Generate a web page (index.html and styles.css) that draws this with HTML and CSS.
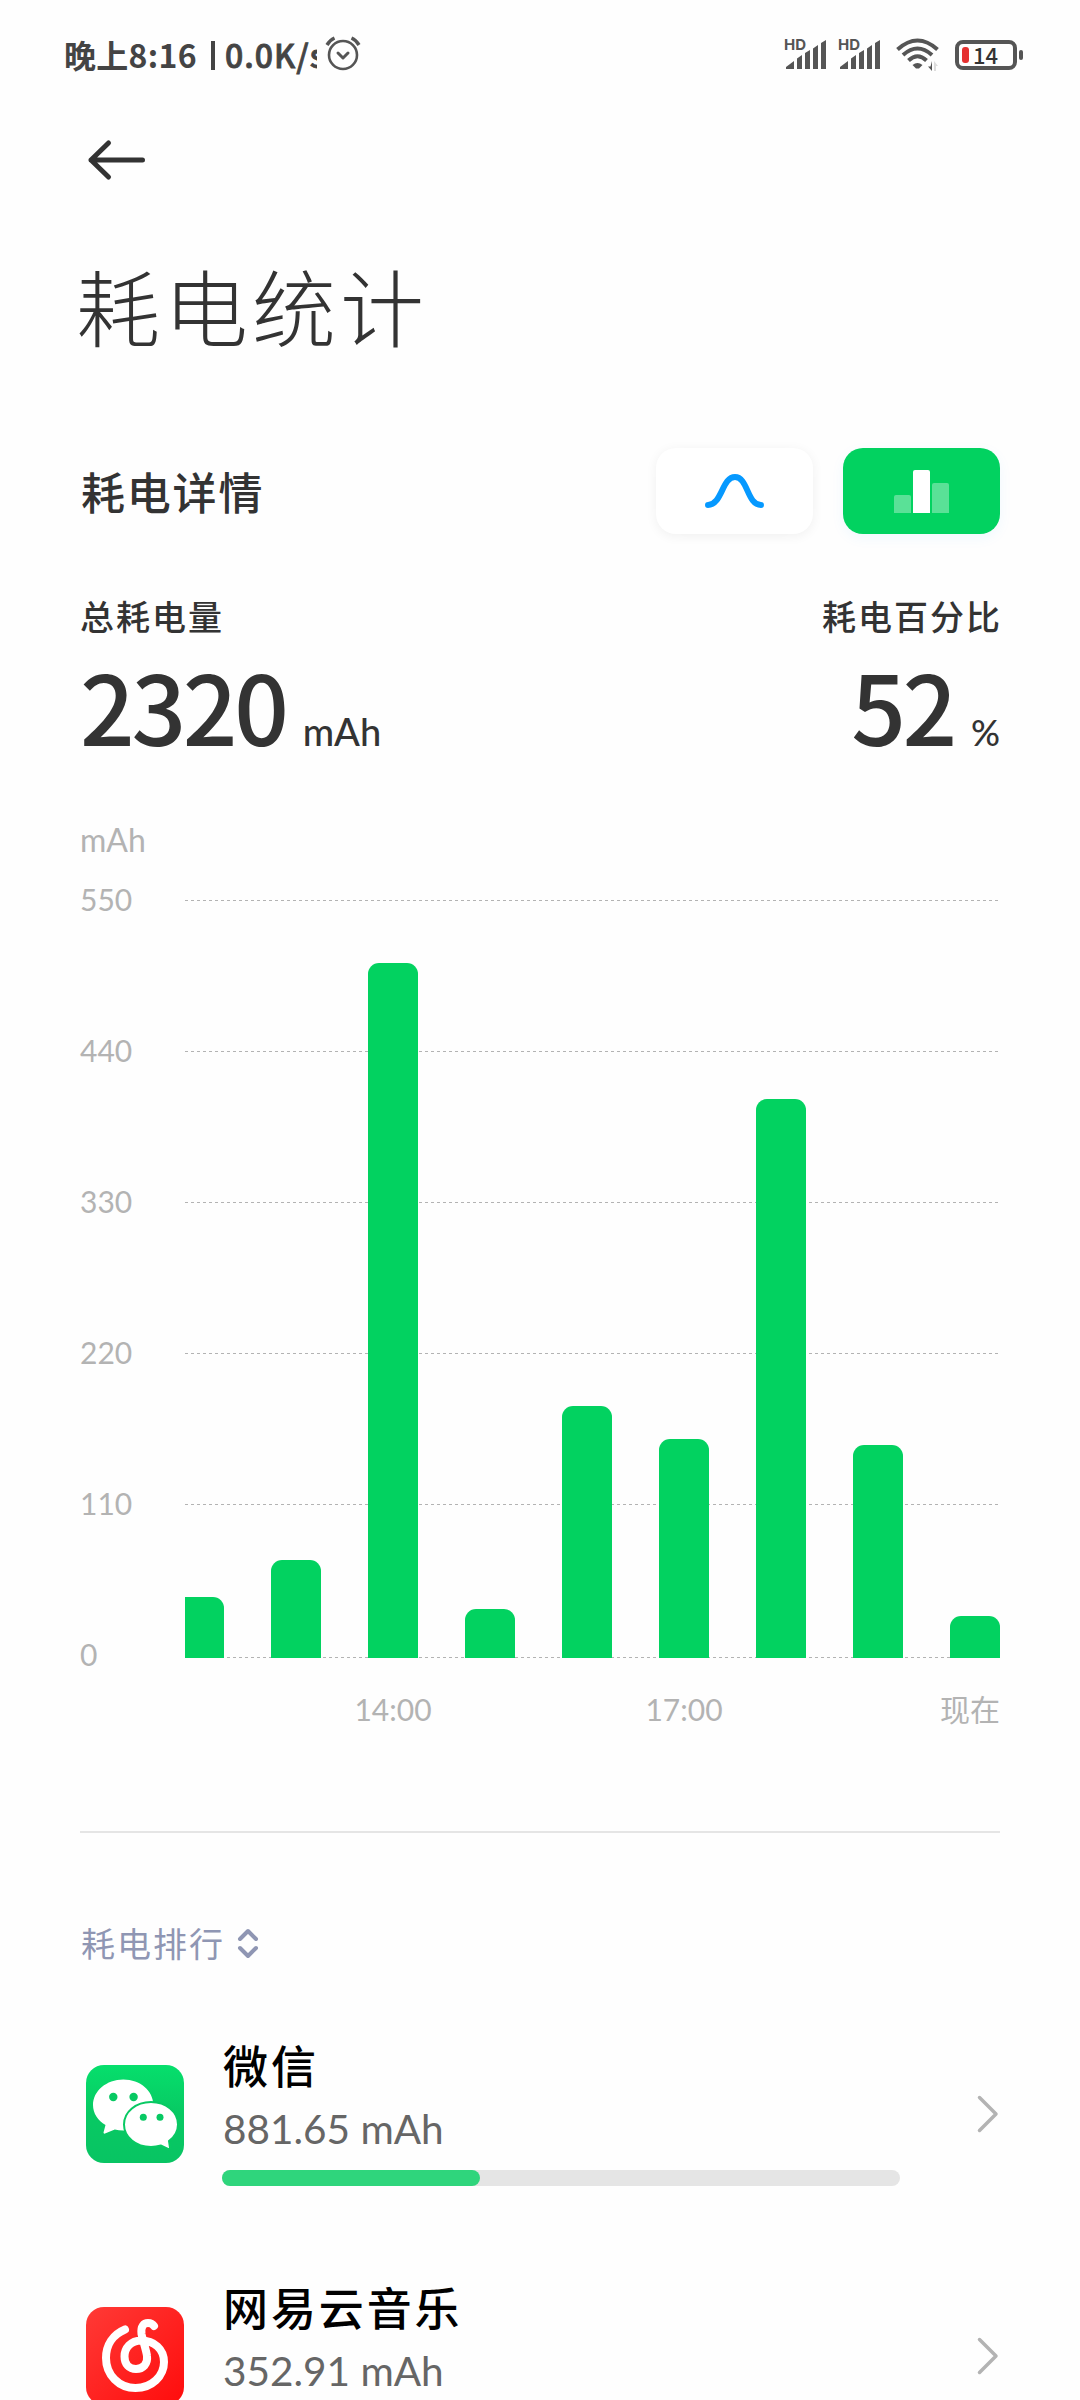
FILE: index.html
```html
<!DOCTYPE html>
<html lang="zh-CN">
<head>
  <meta charset="UTF-8" />
  <meta name="viewport" content="width=device-width, initial-scale=1.0" />
  <title>耗电统计</title>
  <link rel="stylesheet" href="styles.css">
</head>
<body>
  <div class="screen">
    <!-- 状态栏 -->
    <div class="status-bar">
      <div class="status-left">
        <span class="clock">晚上8:16</span>
        <span class="separator"></span>
        <span class="speed">0.0K/s</span>
        <svg class="alarm" width="36" height="36" viewBox="0 0 36 36" fill="none" stroke="#555" stroke-width="3" stroke-linecap="round" stroke-linejoin="round">
          <circle cx="18" cy="20" r="14" stroke-width="2.6"/>
          <path d="M13 18l5 5 5-5"/>
          <path d="M2 10Q5 5 9.500 3M34 10Q31 5 26.500 3" stroke-linecap="butt" stroke-width="3.500"/>
        </svg>
      </div>
      <div class="status-right">
        <div class="signal">
          <span class="hd">HD</span>
          <svg width="42" height="30" viewBox="0 0 42 30" fill="#555">
            <path d="M1 29v-2l8-6v8zM12 29V18.500l5-3.500v14zM20 29V13l5-3v19zM28 29V8.500l5-3.500v24zM36 29V3l5-3v29z"/>
          </svg>
        </div>
        <div class="signal">
          <span class="hd">HD</span>
          <svg width="42" height="30" viewBox="0 0 42 30" fill="#555">
            <path d="M1 29v-2l8-6v8zM12 29V18.500l5-3.500v14zM20 29V13l5-3v19zM28 29V8.500l5-3.500v24zM36 29V3l5-3v29z"/>
          </svg>
        </div>
        <svg class="wifi" width="44" height="34" viewBox="0 0 44 34" fill="none" stroke="#555" stroke-width="4">
          <path d="M1.500 11.500Q21.500-6.500 41.500 11.500M7 17Q21.500 4 36 17M12.500 22.500Q21.500 14 30.500 22.500"/>
          <path d="M16.500 27Q21.500 23 26.500 27L23 30.500h-3z" fill="#555" stroke="none"/>
          <path d="M36 23v10l-4-4.500h2.500z" fill="#555" stroke="none"/>
          <path d="M38 33V23l4 5h-2v5z" fill="#ddd" stroke="none"/>
        </svg>
        <div class="battery">
          <span class="battery-level"></span>
          <span class="battery-text">14</span>
        </div>
      </div>
    </div>

    <div class="back">
      <svg width="60" height="42" viewBox="0 0 60 42" fill="none" stroke="#333" stroke-width="5" stroke-linecap="round" stroke-linejoin="round">
        <path d="M23.500 4L6 21l17.500 17M6 21h51.500"/>
      </svg>
    </div>

    <h1>耗电统计</h1>

    <div class="section-head">
      <h2>耗电详情</h2>
      <div class="tabs">
        <div class="tab">
          <svg width="60" height="36" viewBox="0 0 60 36" fill="none" stroke="#0699ff" stroke-width="6" stroke-linecap="round">
            <path d="M3 32C17 32 17 4 30 4S42 32 56 32"/>
          </svg>
        </div>
        <div class="tab active">
          <svg width="56" height="44" viewBox="0 0 56 44" fill="#fff">
            <path d="M0 44V28q0-2 2-2h13q2 0 2 2v16z" opacity=".35"/>
            <path d="M19 44V3q0-2 2-2h13q2 0 2 2v41z"/>
            <path d="M38 44V16q0-2 2-2h13q2 0 2 2v28z" opacity=".35"/>
          </svg>
        </div>
      </div>
    </div>

    <div class="summary">
      <div class="total">
        <p>总耗电量</p>
        <div class="number">2320<span>mAh</span></div>
      </div>
      <div class="percent">
        <p>耗电百分比</p>
        <div class="number">52<span>%</span></div>
      </div>
    </div>

    <!-- 柱状图 -->
    <div class="unit">mAh</div>
    <div class="chart">
      <div class="y-axis">
        <span>550</span>
        <span>440</span>
        <span>330</span>
        <span>220</span>
        <span>110</span>
        <span>0</span>
      </div>
      <div class="plot">
        <div class="grid">
          <i></i><i></i><i></i><i></i><i></i><i></i>
        </div>
        <div class="bars">
          <div class="bar cut" style="height: 61px"></div>
          <div class="bar" style="height: 98px"></div>
          <div class="bar" style="height: 695px"></div>
          <div class="bar" style="height: 49px"></div>
          <div class="bar" style="height: 252px"></div>
          <div class="bar" style="height: 219px"></div>
          <div class="bar" style="height: 559px"></div>
          <div class="bar" style="height: 213px"></div>
          <div class="bar" style="height: 42px"></div>
        </div>
      </div>
    </div>
    <div class="x-axis">
      <span></span><span></span><span>14:00</span>
      <span></span><span></span><span>17:00</span>
      <span></span><span></span><span class="now">现在</span>
    </div>

    <div class="divider"></div>

    <!-- 排行 -->
    <div class="rank-title">
      <span>耗电排行</span>
      <svg width="22" height="32" viewBox="0 0 22 32" fill="none" stroke="#8f96b3" stroke-width="4" stroke-linecap="round" stroke-linejoin="round">
        <path d="M3 12l8-8 8 8M3 21l8 8 8-8"/>
      </svg>
    </div>

    <div class="item">
      <svg class="app-icon" width="98" height="98" viewBox="0 0 98 98">
        <defs>
          <linearGradient id="green" x1="0" y1="0" x2="0" y2="1">
            <stop offset="0" stop-color="#06df6c"/>
            <stop offset=".5" stop-color="#08c963"/>
            <stop offset="1" stop-color="#08c463"/>
          </linearGradient>
        </defs>
        <rect width="98" height="98" rx="18" fill="url(#green)"/>
        <path fill="#fff" d="M37.300 14.500c17 0 30 11.400 30 25.500s-13 25.500-30 25.500q-4.500 0-8.500-1L19 68.500q-1.500.5-1.500-1l2-7.500C12 55.500 7 48.500 7 40c0-14 13.500-25.500 30.300-25.500z"/>
        <path fill="#fff" stroke="#08c963" stroke-width="2" d="M65 37c15 0 27 9.800 27 22.500 0 7-3.500 12.500-9 16.500l1 6.500q0 2-2 1.500l-7-3.500q-5 1.500-10 1.500c-15 0-27-9.800-27-22.500S50 37 65 37z"/>
        <g fill="#08c963">
          <circle cx="27.300" cy="32" r="4.200"/>
          <circle cx="47.600" cy="32" r="4.200"/>
          <circle cx="57.300" cy="52.300" r="3.500"/>
          <circle cx="74" cy="52.300" r="3.500"/>
        </g>
      </svg>
      <div class="info">
        <div class="name">微信</div>
        <div class="value">881.65 mAh</div>
        <div class="progress"><div class="fill" style="width: 38.100%"></div></div>
      </div>
      <svg class="arrow" width="24" height="40" viewBox="0 0 24 40" fill="none" stroke="#b3b3b3" stroke-width="3.500" stroke-linecap="round" stroke-linejoin="round">
        <path d="M3.500 3.500L20 20 3.500 36.500"/>
      </svg>
    </div>

    <div class="item">
      <svg class="app-icon" width="98" height="98" viewBox="0 0 98 98">
        <defs>
          <linearGradient id="red" x1="0" y1="0" x2="1" y2="1">
            <stop offset="0" stop-color="#ff3a36"/>
            <stop offset="1" stop-color="#ff0c0c"/>
          </linearGradient>
        </defs>
        <rect width="98" height="98" rx="18" fill="url(#red)"/>
        <path fill="none" stroke="#fff" stroke-width="8" stroke-linecap="round" d="M39 22.500C27 27.500 20 38 20 51c0 17 13 30 29.500 30S78 69 78 55c0-13-10-21.500-23-21.500-10 0-16.500 7.500-16.500 16C38.500 57 43 62 50 62s12-5 11-13c-.5-5-4-15-5.500-22-1-8 2.500-11 6.500-11q4 0 6 3"/>
      </svg>
      <div class="info">
        <div class="name">网易云音乐</div>
        <div class="value">352.91 mAh</div>
        <div class="progress"><div class="fill" style="width: 15.300%"></div></div>
      </div>
      <svg class="arrow" width="24" height="40" viewBox="0 0 24 40" fill="none" stroke="#b3b3b3" stroke-width="3.500" stroke-linecap="round" stroke-linejoin="round">
        <path d="M3.500 3.500L20 20 3.500 36.500"/>
      </svg>
    </div>
  </div>
</body>
</html>
```
FILE: styles.css
```css
* {
  margin: 0;
  padding: 0;
  box-sizing: border-box;
}

body {
  background: #fefefe;
  font-family: "Noto Sans CJK SC", sans-serif;
  color: #333;
}

svg {
  display: block;
  flex-shrink: 0;
}

.screen {
  width: 1080px;
  height: 2400px;
  overflow: hidden;
  padding: 0 80px;
}

/* status bar */
.status-bar {
  display: flex;
  justify-content: space-between;
  height: 110px;
  margin: 0 -23px 0 -16px;
}

.status-left,
.status-right {
  display: flex;
  align-items: center;
}

.status-left {
  font-size: 32px;
  font-weight: 700;
  color: #444;
  line-height: 46px;
}

.clock {
  width: 136px;
  margin-top: -2px;
  letter-spacing: 0.3px;
  white-space: nowrap;
}

.separator {
  width: 4px;
  height: 29px;
  margin: 0 10px 0 11px;
  background: #444;
}

.speed {
  width: 92px;
  margin-top: -2px;
  overflow: hidden;
  font-weight: 500;
  letter-spacing: 1px;
  white-space: nowrap;
  -webkit-text-stroke: 0.8px #444;
}

.alarm {
  margin-left: 8px;
  margin-top: -5px;
}

.signal {
  width: 42px;
  height: 30px;
  margin-right: 12px;
  position: relative;
}

.hd {
  position: absolute;
  left: -1px;
  top: -3px;
  font: bold 15px/15px Inter, sans-serif;
  color: #555;
}

.wifi {
  margin-right: 15px;
  margin-left: 3px;
}

.battery {
  position: relative;
  display: flex;
  align-items: center;
  width: 62px;
  height: 30px;
  margin-right: 6px;
  padding-left: 3px;
  border: 4px solid #555;
  border-radius: 8px;
}

.battery::after {
  content: "";
  position: absolute;
  right: -10px;
  top: 6px;
  width: 4px;
  height: 10px;
  border-radius: 2px;
  background: #555;
}

.battery-level {
  width: 7px;
  height: 16px;
  border-radius: 3px;
  background: #e53030;
}

.battery-text {
  margin: -3px 0 0 4px;
  font-size: 22px;
  font-weight: 500;
  line-height: 22px;
}

/* header */
.back {
  height: 100px;
  padding: 29px 0 0 5px;
}

h1 {
  height: 190px;
  margin-left: -4px;
  font-size: 84px;
  font-weight: 300;
  line-height: 190px;
  letter-spacing: 4px;
}

.section-head {
  display: flex;
  justify-content: space-between;
  align-items: center;
  height: 86px;
  margin-top: 48px;
}

h2 {
  margin-left: 1px;
  font-size: 44px;
  font-weight: 500;
  letter-spacing: 1.800px;
}

.tabs {
  display: flex;
  gap: 30px;
}

.tab {
  display: flex;
  justify-content: center;
  align-items: center;
  width: 157px;
  height: 86px;
  border-radius: 20px;
  background: #fff;
  box-shadow: 0 2px 12px rgba(0, 0, 0, 0.06);
}

.tab.active {
  background: #02d260;
  box-shadow: 0 4px 14px rgba(0, 150, 255, 0.06);
}

/* totals */
.summary {
  display: flex;
  justify-content: space-between;
  height: 280px;
  padding-top: 59px;
}

.summary p {
  height: 46px;
  font-size: 34px;
  font-weight: 500;
  line-height: 46px;
  letter-spacing: 2px;
}

.number {
  height: 120px;
  font-size: 96px;
  font-weight: 500;
  line-height: 132px;
  letter-spacing: -3.300px;
}

.number span {
  margin-left: 17px;
  font-family: Lato, sans-serif;
  font-size: 38px;
  font-weight: 500;
  letter-spacing: 0;
}

.percent {
  text-align: right;
}

.percent p {
  margin-right: -2px;
}

.percent .number span {
  font-size: 36px;
}

/* chart */
.unit,
.y-axis,
.x-axis {
  font-family: Lato, "Noto Sans CJK SC", sans-serif;
  font-size: 30px;
  color: #b3b3b3;
}

.unit {
  height: 52px;
  font-size: 32px;
  line-height: 52px;
}

.chart {
  display: flex;
  height: 758px;
  margin-top: 34px;
}

.y-axis {
  display: flex;
  flex-direction: column;
  justify-content: space-between;
  width: 105px;
  margin: -20px 0 -15px;
}

.y-axis span {
  height: 38px;
  line-height: 38px;
}

.plot {
  display: grid;
  width: 815px;
}

.grid,
.bars {
  grid-area: 1 / 1;
  display: flex;
}

.grid {
  flex-direction: column;
  gap: 150px;
  width: 813px;
}

.grid i {
  height: 1px;
  background: repeating-linear-gradient(90deg, #b3b3b3 0 3px, transparent 3px 6px);
}

.grid i:last-child {
  margin-top: 2px;
}

.bars {
  justify-content: space-between;
  align-items: flex-end;
}

.bar {
  width: 50px;
  border-radius: 11px 11px 0 0;
  background: #02d260;
}

.bar.cut {
  width: 39px;
  border-top-left-radius: 0;
}

.x-axis {
  display: flex;
  justify-content: space-between;
  margin-left: 94px;
  height: 100px;
  line-height: 102px;
  white-space: nowrap;
}

.x-axis span {
  display: flex;
  justify-content: center;
  width: 50px;
}

.x-axis .now {
  justify-content: flex-end;
}

.divider {
  height: 2px;
  margin-top: 73px;
  background: #e5e5e5;
}

/* ranking */
.rank-title {
  display: flex;
  align-items: center;
  height: 160px;
  padding: 60px 0 0 1px;
  font-size: 34px;
  line-height: 100px;
  letter-spacing: 2px;
  color: #8f96b3;
}

.rank-title svg {
  margin-left: 12px;
}

.item {
  display: flex;
  align-items: center;
  height: 242px;
  padding-left: 6px;
}

.info {
  width: 678px;
  height: 156px;
  margin-left: 38px;
}

.name {
  height: 58px;
  margin: 0 0 2px 1px;
  font-size: 45px;
  font-weight: 500;
  line-height: 58px;
  letter-spacing: 2.900px;
  color: #000;
}

.value {
  height: 68px;
  margin-left: 1px;
  font-family: Lato, sans-serif;
  font-size: 40.500px;
  line-height: 66px;
  color: #666;
}

.progress {
  height: 16px;
  margin-top: 6px;
  border-radius: 8px;
  background: #e5e5e5;
}

.fill {
  height: 16px;
  border-radius: 8px;
  background: #2fd57c;
}

.arrow {
  margin-left: auto;
}
```
